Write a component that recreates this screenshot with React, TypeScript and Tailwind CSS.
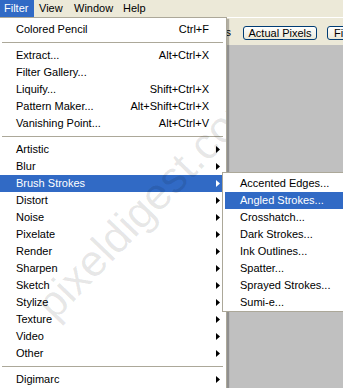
import React from "react";

type Item =
  | { kind: "item"; label: string; shortcut?: string; sub?: boolean; active?: boolean }
  | { kind: "sep" };

const mainItems: Item[] = [
  { kind: "item", label: "Colored Pencil", shortcut: "Ctrl+F" },
  { kind: "sep" },
  { kind: "item", label: "Extract...", shortcut: "Alt+Ctrl+X" },
  { kind: "item", label: "Filter Gallery..." },
  { kind: "item", label: "Liquify...", shortcut: "Shift+Ctrl+X" },
  { kind: "item", label: "Pattern Maker...", shortcut: "Alt+Shift+Ctrl+X" },
  { kind: "item", label: "Vanishing Point...", shortcut: "Alt+Ctrl+V" },
  { kind: "sep" },
  { kind: "item", label: "Artistic", sub: true },
  { kind: "item", label: "Blur", sub: true },
  { kind: "item", label: "Brush Strokes", sub: true, active: true },
  { kind: "item", label: "Distort", sub: true },
  { kind: "item", label: "Noise", sub: true },
  { kind: "item", label: "Pixelate", sub: true },
  { kind: "item", label: "Render", sub: true },
  { kind: "item", label: "Sharpen", sub: true },
  { kind: "item", label: "Sketch", sub: true },
  { kind: "item", label: "Stylize", sub: true },
  { kind: "item", label: "Texture", sub: true },
  { kind: "item", label: "Video", sub: true },
  { kind: "item", label: "Other", sub: true },
  { kind: "sep" },
  { kind: "item", label: "Digimarc", sub: true },
];

const subItems = [
  "Accented Edges...",
  "Angled Strokes...",
  "Crosshatch...",
  "Dark Strokes...",
  "Ink Outlines...",
  "Spatter...",
  "Sprayed Strokes...",
  "Sumi-e...",
];

function Arrow({ white }: { white?: boolean }) {
  return (
    <svg width="4" height="7" viewBox="0 0 4 7" className="shrink-0">
      <polygon points="0,0 4,3.5 0,7" fill={white ? "#fff" : "#000"} />
    </svg>
  );
}

export default function App() {
  return (
    <div className="relative w-[343px] h-[388px] overflow-hidden bg-[#c0c0c0] font-['Liberation_Sans',Arial,sans-serif] text-[11px] text-black">
      {/* menu bar */}
      <div className="flex h-[17px] bg-[#ece9d8] leading-[17px]">
        <div className="w-[34px] pl-[4px] bg-[#316ac5] text-white">Filter</div>
        <div className="w-[34px] pl-[5px]">View</div>
        <div className="w-[49px] pl-[6px]">Window</div>
        <div className="pl-[6px]">Help</div>
      </div>

      {/* options bar */}
      <div className="flex items-center h-[28px] bg-[#ece9d8] border-t border-white pt-[2px]">
        <div className="w-[231px] shrink-0 text-right whitespace-nowrap">Zoom All Windows</div>
        <button className="ml-[12px] w-[74px] h-[14px] shrink-0 rounded-[3px] border border-[#003c74] bg-gradient-to-b from-white to-[#ece9d8] text-[11px] leading-[12px] text-center">
          Actual Pixels
        </button>
        <button className="ml-[10px] w-[62px] h-[14px] shrink-0 rounded-[3px] border border-[#003c74] bg-gradient-to-b from-white to-[#ece9d8] text-[11px] leading-[12px] text-left pl-[6px]">
          Fit Screen
        </button>
      </div>

      {/* Filter dropdown */}
      <div className="absolute left-[-4px] top-[17px] w-[231px] h-[400px] overflow-hidden bg-white border border-[#aca899] px-[3px] pt-[3px] shadow-[2px_2px_1px_rgba(0,0,0,0.25)]">
        {mainItems.map((it, i) =>
          it.kind === "sep" ? (
            <div key={i} className="h-[9px] pt-[4px]">
              <div className="h-px bg-[#aca899] ml-[2px]" />
            </div>
          ) : (
            <div
              key={i}
              className={`flex items-center h-[17px] pl-[16px] pr-[3px] whitespace-nowrap ${
                it.active ? "bg-[#316ac5] text-white" : ""
              }`}
            >
              <span className="flex-1">{it.label}</span>
              {it.shortcut && <span className="mr-[11px]">{it.shortcut}</span>}
              {it.sub && <Arrow white={it.active} />}
            </div>
          )
        )}
        <div className="pointer-events-none absolute left-[-8px] top-[158px] w-[320px] h-[52px] leading-[52px] text-center text-[44px] whitespace-nowrap text-[rgba(0,0,0,0.1)] rotate-[-46deg]">
          pixeldigest.com
        </div>
      </div>

      {/* Brush Strokes submenu */}
      <div className="absolute left-[222px] top-[172px] w-[130px] bg-white border border-[#aca899] px-[2px] pt-[2px] pb-0">
        {subItems.map((s, i) => (
          <div
            key={s}
            className={`h-[17px] leading-[17px] pl-[15px] whitespace-nowrap ${
              i === 1 ? "bg-[#316ac5] text-white" : ""
            }`}
          >
            {s}
          </div>
        ))}
      </div>
    </div>
  );
}
